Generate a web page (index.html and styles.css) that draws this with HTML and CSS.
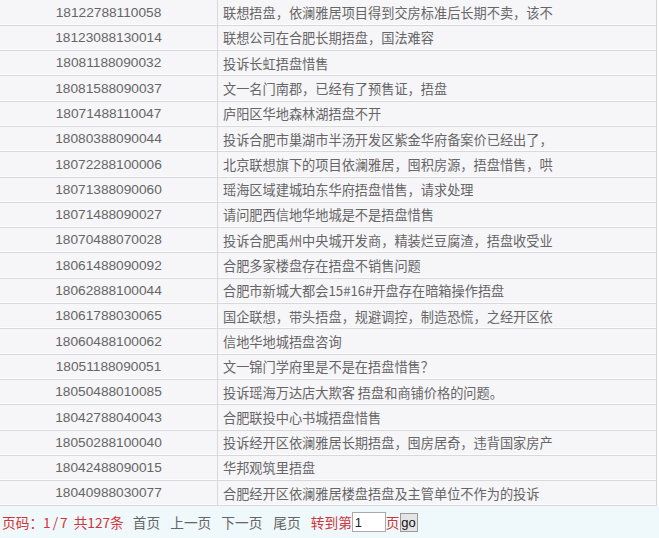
FILE: index.html
```html
<!DOCTYPE html>
<html lang="zh">
<head>
<meta charset="utf-8">
<link rel="stylesheet" href="styles.css">
</head>
<body>
<table class="list">
<tbody>
<tr><td class="num">18122788110058</td><td class="title">联想捂盘，依澜雅居项目得到交房标准后长期不卖，该不</td></tr>
<tr><td class="num">18123088130014</td><td class="title">联想公司在合肥长期捂盘，国法难容</td></tr>
<tr><td class="num">18081188090032</td><td class="title">投诉长虹捂盘惜售</td></tr>
<tr><td class="num">18081588090037</td><td class="title">文一名门南郡，已经有了预售证，捂盘</td></tr>
<tr><td class="num">18071488110047</td><td class="title">庐阳区华地森林湖捂盘不开</td></tr>
<tr><td class="num">18080388090044</td><td class="title">投诉合肥市巢湖市半汤开发区紫金华府备案价已经出了，</td></tr>
<tr><td class="num">18072288100006</td><td class="title">北京联想旗下的项目依澜雅居，囤积房源，捂盘惜售，哄</td></tr>
<tr><td class="num">18071388090060</td><td class="title">瑶海区域建城珀东华府捂盘惜售，请求处理</td></tr>
<tr><td class="num">18071488090027</td><td class="title">请问肥西信地华地城是不是捂盘惜售</td></tr>
<tr><td class="num">18070488070028</td><td class="title">投诉合肥禹州中央城开发商，精装烂豆腐渣，捂盘收受业</td></tr>
<tr><td class="num">18061488090092</td><td class="title">合肥多家楼盘存在捂盘不销售问题</td></tr>
<tr><td class="num">18062888100044</td><td class="title">合肥市新城大都会15#16#开盘存在暗箱操作捂盘</td></tr>
<tr><td class="num">18061788030065</td><td class="title">国企联想，带头捂盘，规避调控，制造恐慌，之经开区依</td></tr>
<tr><td class="num">18060488100062</td><td class="title">信地华地城捂盘咨询</td></tr>
<tr><td class="num">18051188090051</td><td class="title">文一锦门学府里是不是在捂盘惜售？</td></tr>
<tr><td class="num">18050488010085</td><td class="title">投诉瑶海万达店大欺客 捂盘和商铺价格的问题。</td></tr>
<tr><td class="num">18042788040043</td><td class="title">合肥联投中心书城捂盘惜售</td></tr>
<tr><td class="num">18050288100040</td><td class="title">投诉经开区依澜雅居长期捂盘，囤房居奇，违背国家房产</td></tr>
<tr><td class="num">18042488090015</td><td class="title">华邦观筑里捂盘</td></tr>
<tr><td class="num">18040988030077</td><td class="title">合肥经开区依澜雅居楼盘捂盘及主管单位不作为的投诉</td></tr>
</tbody>
</table>
<div class="pager">
  <span class="red label">页码：</span><span class="red pages">1/7</span>
  <span class="red total">共127条</span>
  <a class="link first">首页</a>
  <a class="link prev">上一页</a>
  <a class="link next">下一页</a>
  <a class="link last">尾页</a>
  <span class="red goto">转到第</span><input class="page-input" type="text" value="1"><span class="red unit">页</span><button class="go">go</button>
</div>
</body>
</html>
```
FILE: styles.css
```css
html, body {
  margin: 0;
  padding: 0;
  background: #ffffff;
}
body {
  width: 659px;
  height: 538px;
  overflow: hidden;
  font-family: "Noto Sans CJK SC", "Liberation Sans", sans-serif;
}
.list {
  border-collapse: collapse;
  width: 657px;
  background: #f6f5f8;
  border-right: 1px solid #d6d6d8;
}
.list tr {
  height: 25.3px;
}
.list td {
  padding: 0;
  border-bottom: 1px solid #d8d8dc;
  box-shadow: inset 0 -1px 0 #fdfdfe;
  color: #666666;
  white-space: nowrap;
  line-height: 1;
  vertical-align: middle;
}
.list td.num {
  width: 217px;
  text-align: center;
  font-family: "Liberation Sans", "Noto Sans CJK SC", sans-serif;
  font-size: 13.7px;
  border-right: 1px solid #d8d8dc;
}
.list td.title {
  padding-left: 5px;
  font-size: 13.2px;
}
.pager {
  height: 32px;
  background: #eff8fa;
  display: flex;
  align-items: center;
  padding-left: 2px;
  font-size: 13.7px;
  color: #666;
  white-space: nowrap;
}
.red {
  color: #d0353b;
}
.pages {
  letter-spacing: 2px;
}
.total {
  margin-left: 4px;
}
.link {
  color: #666666;
  margin-left: 10px;
}
.link.first {
  margin-left: 9px;
}
.link.last {
  margin-left: 11px;
}
.goto {
  margin-left: 10px;
}
.page-input {
  box-sizing: border-box;
  width: 34px;
  height: 20px;
  margin: 0;
  padding: 0 2px;
  border: 1px solid #a9a9a9;
  background: #fff;
  font-family: "Liberation Sans", sans-serif;
  font-size: 13px;
  color: #222;
}
.unit {
  margin-left: 0;
}
.go {
  box-sizing: border-box;
  height: 19px;
  width: 18px;
  margin: 0;
  padding: 0;
  border: 1px solid #9a9a9a;
  background: #e4e4e4;
  font-family: "Liberation Sans", sans-serif;
  font-size: 13px;
  color: #111;
  line-height: 1;
}
```
